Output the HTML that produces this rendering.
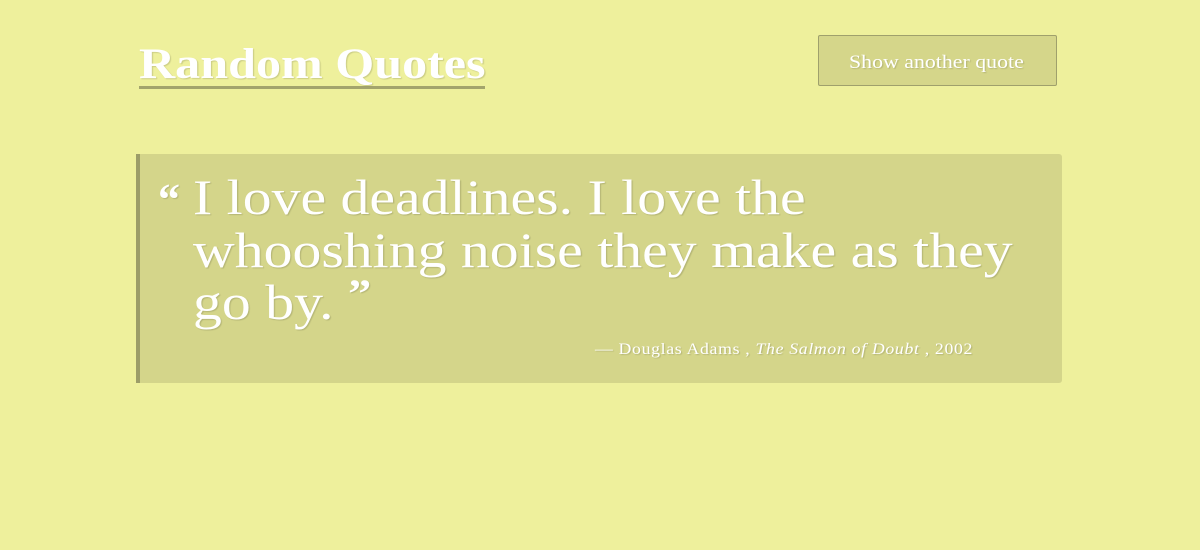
<!DOCTYPE html>
<html><head><style>
html,body{margin:0;padding:0;}
body{width:1200px;height:550px;background:#eef09c;font-family:"Liberation Serif",serif;color:#fff;position:relative;overflow:hidden;text-shadow:1px 1px 1px rgba(0,0,0,0.15);}
.s{display:inline-block;transform-origin:0 0;white-space:nowrap;}
.title{position:absolute;left:139px;top:38px;width:346px;height:48px;border-bottom:3px solid #a3a46c;}
.title .s{font-size:43px;font-weight:bold;line-height:48px;transform:scaleX(1.165);position:relative;top:3px;}
.btn{position:absolute;left:818px;top:35px;width:237px;height:49px;border:1.5px solid #9fa06c;border-radius:2px;background:#d5d68a;}
.btn .s{position:absolute;left:30px;top:1px;font-size:19px;line-height:51px;transform:scaleX(1.15);}
.box{position:absolute;left:136px;top:154px;width:922px;height:229px;background:#d4d58a;border-left:4px solid #9c9d68;border-radius:0 3px 3px 0;}
.q{position:absolute;left:53px;top:17px;}
.q .s{font-size:50px;line-height:52.5px;transform:scaleX(1.155);}
.cq{font-size:40px;font-weight:bold;position:relative;top:-12px;line-height:0;}
.oq{position:absolute;left:18px;top:20px;font-size:44px;font-weight:bold;}
.cite{position:absolute;left:455px;top:187px;}
.cite .s{font-size:16px;letter-spacing:0.6px;transform:scaleX(1.11);}
</style></head><body>
<div class="title"><span class="s">Random Quotes</span></div>
<div class="btn"><span class="s">Show another quote</span></div>
<div class="box">
<div class="oq">“</div>
<div class="q"><span class="s">I love deadlines. I love the<br>whooshing noise they make as they<br>go by. <span class="cq">”</span></span></div>
<div class="cite"><span class="s">— Douglas Adams , <i>The Salmon of Doubt</i> , 2002</span></div>
</div>
</body></html>
